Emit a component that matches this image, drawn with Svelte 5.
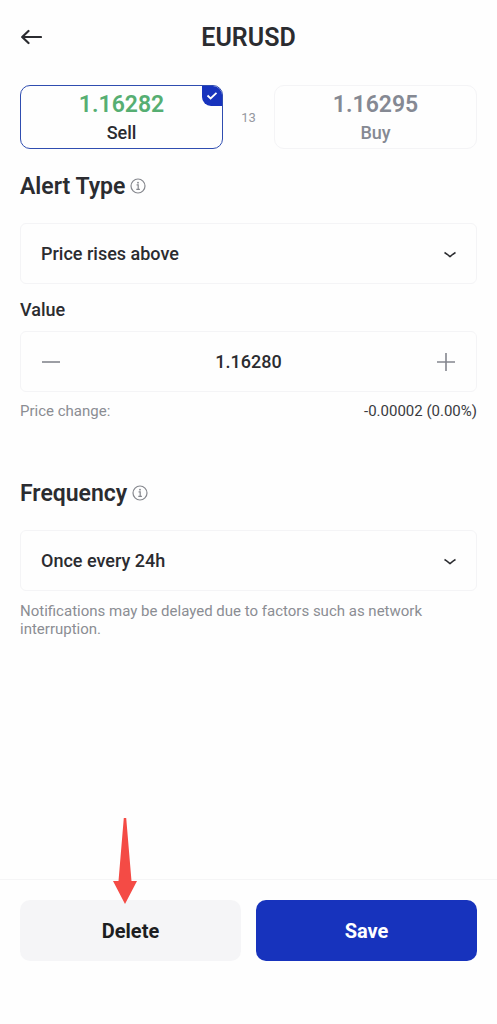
<script lang="ts">
  // State
  let side = 'sell';
  let alertType = 'above';
  let frequency = 'daily';
  let value = '1.16280';

  const quotes = [
    { id: 'sell', label: 'Sell', price: '1.16282' },
    { id: 'buy', label: 'Buy', price: '1.16295' }
  ];
  const spread = 13;

  // Move the value by one point
  function step(direction: number) {
    value = (Number(value) + direction * 0.00001).toFixed(5);
  }

  $: change = Number(value) - Number(quotes[0].price);
  $: percent = Math.abs((change / Number(quotes[0].price)) * 100);
</script>

{#snippet infoIcon()}
  <svg class="info-icon" viewBox="0 0 16 16" aria-hidden="true">
    <circle cx="8" cy="8" r="7" />
    <path d="M6.6 6.9h1.6v4.3M6.3 11.3h3.6" />
    <circle class="dot" cx="8" cy="4.7" r="0.9" />
  </svg>
{/snippet}

{#snippet chevron()}
  <svg class="chevron" viewBox="0 0 14 8" aria-hidden="true">
    <path d="M1.5 1.5C3.8 2.8 5.3 4.2 7 5.6C8.7 4.2 10.2 2.8 12.5 1.5" />
  </svg>
{/snippet}

<div class="page">
  <header>
    <button class="back" aria-label="Back">
      <svg viewBox="0 0 22 16" aria-hidden="true">
        <path d="M21 8H2.5M8.5 2L2.2 8L8.5 14" />
      </svg>
    </button>
    <h1>EURUSD</h1>
  </header>

  <main>
    <div class="quotes" role="radiogroup" aria-label="Price side">
      {#each quotes as quote, index}
        {#if index > 0}
          <span class="spread">{spread}</span>
        {/if}
        <label class="quote" class:selected={side === quote.id}>
          <input type="radio" name="side" value={quote.id} bind:group={side} />
          <span class="price">{quote.price}</span>
          <span class="side">{quote.label}</span>
          {#if side === quote.id}
            <span class="badge">
              <svg viewBox="0 0 12 10" aria-hidden="true">
                <path d="M1.5 4.5L4.6 7.5L10.5 1.8" />
              </svg>
            </span>
          {/if}
        </label>
      {/each}
    </div>

    <div class="heading">
      <h2><label for="alert-type">Alert Type</label></h2>
      <button class="info" aria-label="About alert types">{@render infoIcon()}</button>
    </div>
    <div class="select">
      <select id="alert-type" bind:value={alertType}>
        <option value="above">Price rises above</option>
        <option value="below">Price falls below</option>
      </select>
      {@render chevron()}
    </div>

    <label class="field-label" for="value">Value</label>
    <div class="stepper">
      <button aria-label="Decrease" on:click={() => step(-1)}>
        <svg viewBox="0 0 18 18" aria-hidden="true"><path d="M0 9H18" /></svg>
      </button>
      <input id="value" type="text" inputmode="decimal" bind:value />
      <button aria-label="Increase" on:click={() => step(1)}>
        <svg viewBox="0 0 18 18" aria-hidden="true"><path d="M0 9H18M9 0V18" /></svg>
      </button>
    </div>
    <div class="change">
      <span>Price change:</span>
      <span class="amount">{change.toFixed(5)} ({percent.toFixed(2)}%)</span>
    </div>

    <div class="heading">
      <h2><label for="frequency">Frequency</label></h2>
      <button class="info" aria-label="About frequency">{@render infoIcon()}</button>
    </div>
    <div class="select">
      <select id="frequency" bind:value={frequency}>
        <option value="once">Only once</option>
        <option value="daily">Once every 24h</option>
      </select>
      {@render chevron()}
    </div>
    <p class="note">
      Notifications may be delayed due to factors such as network interruption.
    </p>
  </main>

  <footer>
    <div class="action">
      <button class="delete">Delete</button>
      <svg class="pointer" viewBox="0 0 24 86" aria-hidden="true">
        <path d="M10.8 0H13.2L18.500 63H24L12 86L0 63H5.500Z" />
      </svg>
    </div>
    <div class="action">
      <button class="save">Save</button>
    </div>
  </footer>
</div>

<style>
  :global(body) {
    margin: 0;
    background: #fefefe;
  }

  .page {
    display: flex;
    flex-direction: column;
    min-height: 100vh;
    font-family: Roboto, 'Liberation Sans', sans-serif;
    color: #2b2c30;
  }

  button,
  input,
  select {
    box-sizing: border-box;
    margin: 0;
    padding: 0;
    border: none;
    background: none;
    font: inherit;
    color: inherit;
  }

  button,
  select {
    cursor: pointer;
  }

  svg {
    display: block;
    fill: none;
    stroke: currentColor;
  }

  header {
    display: grid;
    grid-template-columns: 1fr auto 1fr;
    align-items: center;
    height: 74px;
    padding: 0 20px;
  }

  .back {
    justify-self: start;
  }

  .back svg {
    width: 22px;
    height: 16px;
    stroke-width: 2.2;
    stroke-linecap: round;
    stroke-linejoin: round;
  }

  h1 {
    margin: 0;
    font-size: 25px;
    font-weight: 600;
  }

  main {
    flex: 1;
    padding: 11px 20px 24px;
  }

  .quotes {
    display: flex;
    align-items: center;
  }

  .quote {
    position: relative;
    box-sizing: border-box;
    flex: 1;
    display: flex;
    flex-direction: column;
    align-items: center;
    height: 64px;
    padding-top: 4px;
    border: 1px solid #f4f4f6;
    border-radius: 10px;
    color: #858993;
    font-weight: 500;
    cursor: pointer;
  }

  .quote.selected {
    border-color: #2f4db0;
    color: #2b2c30;
  }

  .quote input {
    position: absolute;
    opacity: 0;
  }

  .price {
    font-size: 23px;
    font-weight: 600;
    line-height: 29px;
  }

  .selected .price {
    color: #56ae72;
  }

  .side {
    font-size: 18px;
    line-height: 28px;
  }

  .badge {
    position: absolute;
    top: 0;
    right: 0;
    display: flex;
    align-items: center;
    justify-content: center;
    width: 20px;
    height: 20px;
    border-radius: 0 9px 0 9px;
    background: #1733bd;
    color: #fff;
  }

  .badge svg {
    width: 12px;
    height: 10px;
    stroke-width: 1.8;
  }

  .spread {
    width: 51px;
    font-size: 13px;
    text-align: center;
    color: #95989f;
  }

  .heading {
    display: flex;
    align-items: center;
    gap: 5px;
    height: 74px;
  }

  h2 {
    margin: 0;
    font-size: 23px;
    font-weight: 600;
  }

  .info {
    color: #85878d;
  }

  .info-icon {
    width: 16px;
    height: 16px;
    stroke-width: 1.2;
  }

  .info-icon .dot {
    fill: currentColor;
    stroke: none;
  }

  .select {
    position: relative;
  }

  select {
    display: block;
    width: 100%;
    height: 61px;
    padding: 0 48px 0 20px;
    border: 1px solid #f4f4f6;
    border-radius: 6px;
    appearance: none;
    font-size: 18px;
    font-weight: 500;
  }

  .chevron {
    position: absolute;
    top: 28px;
    right: 20px;
    width: 14px;
    height: 8px;
    stroke-width: 1.5;
    pointer-events: none;
  }

  .field-label {
    display: block;
    padding: 14px 0 9px;
    font-size: 18px;
    font-weight: 500;
    line-height: 24px;
  }

  .stepper {
    box-sizing: border-box;
    display: flex;
    height: 61px;
    border: 1px solid #f4f4f6;
    border-radius: 6px;
  }

  .stepper button {
    padding: 0 21px;
    color: #84868e;
  }

  .stepper svg {
    width: 18px;
    height: 18px;
    stroke-width: 1.6;
  }

  .stepper input {
    flex: 1;
    min-width: 0;
    text-align: center;
    font-size: 18px;
    font-weight: 500;
  }

  .change {
    display: flex;
    justify-content: space-between;
    padding: 10px 0 36px;
    font-size: 15px;
    line-height: 18px;
    color: #8b8d93;
  }

  .amount {
    color: #3a3b3f;
  }

  .note {
    margin: 11px 0 0;
    font-size: 15px;
    line-height: 18px;
    color: #8b8d93;
  }

  footer {
    display: flex;
    gap: 15px;
    padding: 20px 20px 63px;
    border-top: 1px solid #f5f5f6;
  }

  .action {
    position: relative;
    flex: 1;
  }

  .action button {
    width: 100%;
    height: 61px;
    border-radius: 10px;
    font-size: 20px;
    font-weight: 700;
  }

  .delete {
    background: #f5f5f7;
    color: #1d1e21;
  }

  .save {
    background: #1733bd;
    color: #fff;
  }

  /* Marker that points down at the delete button */
  .pointer {
    position: absolute;
    bottom: 57px;
    left: 93px;
    width: 24px;
    height: 86px;
    fill: #f44b45;
    stroke: none;
    pointer-events: none;
  }
</style>
